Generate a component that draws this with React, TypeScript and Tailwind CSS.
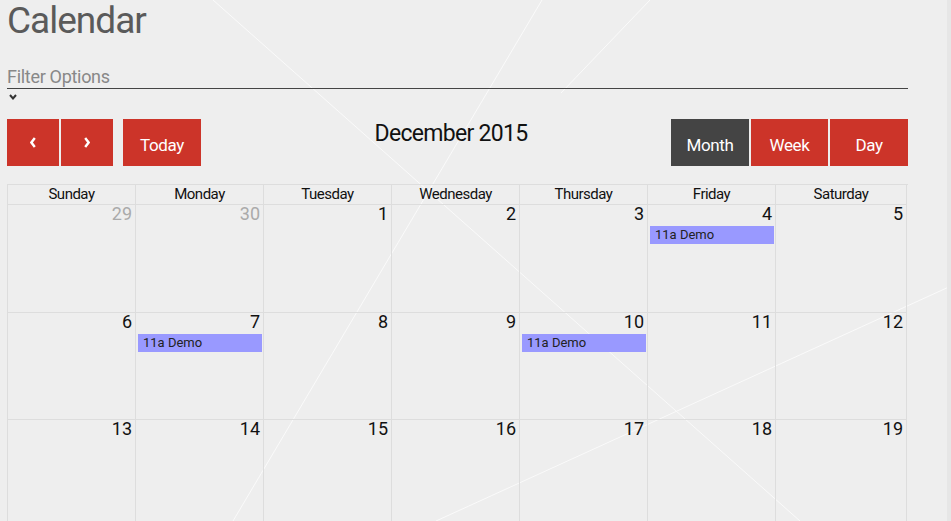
import React from "react";

const days = ["Sunday", "Monday", "Tuesday", "Wednesday", "Thursday", "Friday", "Saturday"];

type Cell = { n: number; other?: boolean; event?: boolean };

const weeks: Cell[][] = [
  [{ n: 29, other: true }, { n: 30, other: true }, { n: 1 }, { n: 2 }, { n: 3 }, { n: 4, event: true }, { n: 5 }],
  [{ n: 6 }, { n: 7, event: true }, { n: 8 }, { n: 9 }, { n: 10, event: true }, { n: 11 }, { n: 12 }],
  [{ n: 13 }, { n: 14 }, { n: 15 }, { n: 16 }, { n: 17 }, { n: 18 }, { n: 19 }],
  [{ n: 20 }, { n: 21 }, { n: 22 }, { n: 23 }, { n: 24 }, { n: 25 }, { n: 26 }],
];

function Chevron({ dir }: { dir: "left" | "right" }) {
  return (
    <svg width="6" height="11" viewBox="0 0 6 11" className="block">
      {dir === "left" ? (
        <path d="M4.8 1 L1.4 5.5 L4.8 10" fill="none" stroke="#fff" strokeWidth="2.4" />
      ) : (
        <path d="M1.2 1 L4.6 5.5 L1.2 10" fill="none" stroke="#fff" strokeWidth="2.4" />
      )}
    </svg>
  );
}

export default function App() {
  return (
    <div className="relative h-[521px] w-[951px] overflow-hidden bg-[#eeeeee] font-['Roboto',sans-serif]">
      <svg className="pointer-events-none absolute left-0 top-0" width="951" height="521">
        <line x1="213" y1="0" x2="800" y2="521" stroke="#fafafa" strokeWidth="1" />
        <line x1="542" y1="0" x2="233" y2="521" stroke="#fafafa" strokeWidth="1" />
        <line x1="650" y1="0" x2="561" y2="93" stroke="#fafafa" strokeWidth="1" />
        <line x1="951" y1="286" x2="436" y2="521" stroke="#fafafa" strokeWidth="1" />
      </svg>
      <div className="absolute right-0 top-0 h-full w-[4px] bg-[#e6e6e6]" />

      <div className="relative ml-[7px] w-[901px]">
        <h1 className="text-[37px] leading-[41px] tracking-[-1px] text-[#5a5a5a]">Calendar</h1>

        <div className="mt-[24px] border-b border-[#444] text-[18px] leading-[23px] tracking-[-0.3px] text-[#888]">Filter Options</div>
        <div className="mt-[5px] pl-[2px]">
          <svg width="8" height="6" viewBox="0 0 8 6" className="block">
            <path d="M1 1 L4 4.5 L7 1" fill="none" stroke="#333" strokeWidth="2" />
          </svg>
        </div>

        <div className="mt-[19px] flex h-[47px] items-start">
          <div className="flex gap-[2px]">
            <button className="flex h-[47px] w-[52px] items-center justify-center bg-[#cc3429]">
              <Chevron dir="left" />
            </button>
            <button className="flex h-[47px] w-[52px] items-center justify-center bg-[#cc3429]">
              <Chevron dir="right" />
            </button>
          </div>
          <button className="ml-[10px] flex h-[47px] w-[78px] items-center justify-center bg-[#cc3429] pt-[6px] text-[17px] tracking-[-0.4px] text-white">
            Today
          </button>
          <div className="flex-1 pl-[30px] text-center">
            <h2 className="text-[23px] leading-[30px] tracking-[-0.7px] text-[#111]">December 2015</h2>
          </div>
          <div className="flex gap-[2px]">
            <button className="flex h-[47px] w-[78px] items-center justify-center bg-[#444] pt-[6px] text-[17px] tracking-[-0.4px] text-white">
              Month
            </button>
            <button className="flex h-[47px] w-[77px] items-center justify-center bg-[#cc3429] pt-[6px] text-[17px] tracking-[-0.4px] text-white">
              Week
            </button>
            <button className="flex h-[47px] w-[78px] items-center justify-center bg-[#cc3429] pt-[6px] text-[17px] tracking-[-0.4px] text-white">
              Day
            </button>
          </div>
        </div>

        <div className="mt-[18px] grid grid-cols-[128px_128px_128px_128px_128px_128px_131px] border-l border-t border-[#dddddd]">
          {days.map((d) => (
            <div key={d} className="h-[20px] border-b border-r border-[#dddddd] text-center text-[15px] leading-[19px] tracking-[-0.5px] text-[#111]">
              {d}
            </div>
          ))}
          {weeks.map((w, wi) =>
            w.map((c, ci) => (
              <div key={`${wi}-${ci}`} className={`${wi === 0 ? "h-[108px]" : "h-[107px]"} border-b border-r border-[#dddddd]`}>
                <div className={`pr-[3px] text-right text-[18px] leading-[18px] ${c.other ? "text-[#aaaaaa]" : "text-[#111]"}`}>{c.n}</div>
                {c.event && (
                  <div className="ml-[2px] mr-[1px] mt-[3px] h-[18px] bg-[#9999ff] pl-[5px] text-[13px] leading-[18px] text-[#222]">
                    11a Demo
                  </div>
                )}
              </div>
            ))
          )}
        </div>
      </div>
    </div>
  );
}
